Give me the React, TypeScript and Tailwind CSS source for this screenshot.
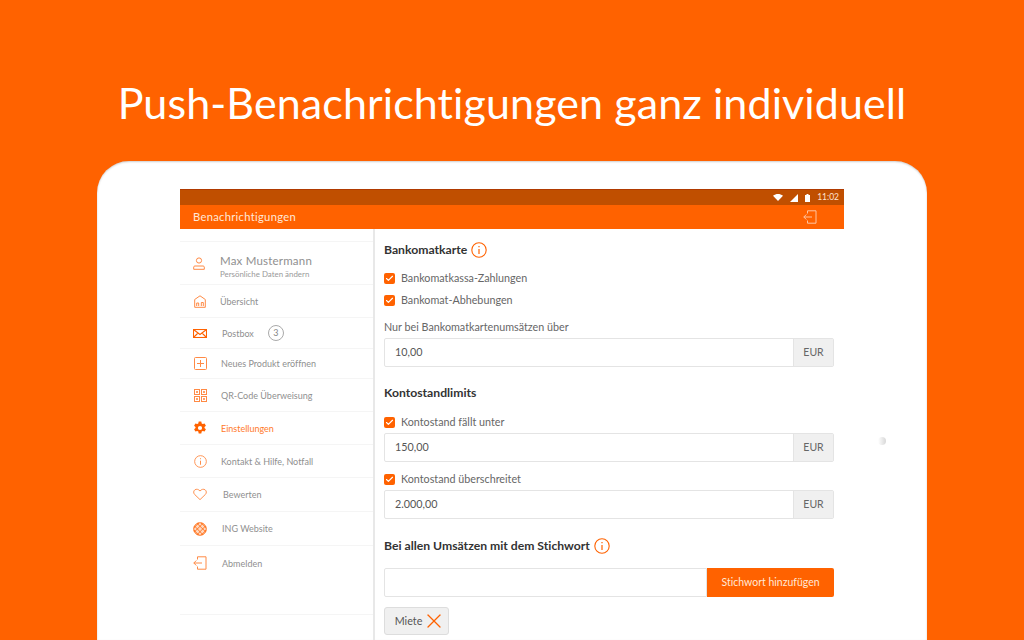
import React from "react";
import { Check, X } from "lucide-react";

const orange = "text-[#ff6200]";

const UserIcon = () => (
  <svg width="12" height="13" viewBox="0 0 12 13" fill="none" stroke="#ff8a45" strokeWidth="1">
    <circle cx="6" cy="3.500" r="2.600" />
    <path d="M1.800 9h8.400c.6 0 1.100.5 1.100 1.100v2.200H.7v-2.200C.7 9.500 1.200 9 1.800 9z" />
  </svg>
);

const HomeIcon = () => (
  <svg width="12" height="13" viewBox="0 0 12 13" fill="none" stroke="#ff8a45" strokeWidth="1">
    <path d="M.7 12.300V4.500L6 .8l5.300 3.700v7.800z" />
    <path d="M2.700 11V8h2v3M7.300 11V7.500h2V11" />
  </svg>
);

const MailIcon = () => (
  <svg width="14" height="9" viewBox="0 0 14 9" fill="none" stroke="#ff6200" strokeWidth="1.100">
    <rect x="0.500" y="0.500" width="13" height="8" />
    <path d="M.5.5 7 5.500l6.500-5M.5 8.500 5 4M13.500 8.500 9 4" />
  </svg>
);

const PlusIcon = () => (
  <svg width="13" height="13" viewBox="0 0 13 13" fill="none" stroke="#ff8a45" strokeWidth="1">
    <rect x="0.500" y="0.500" width="12" height="12" rx="1" />
    <path d="M6.500 3v7M3 6.500h7" />
  </svg>
);

const QrIcon = () => (
  <svg width="13" height="13" viewBox="0 0 13 13" fill="none" stroke="#ff8a45" strokeWidth="1">
    <rect x="0.500" y="0.500" width="5" height="5" />
    <rect x="7.500" y="0.500" width="5" height="5" />
    <rect x="0.500" y="7.500" width="5" height="5" />
    <rect x="7.500" y="7.500" width="5" height="5" />
    <path d="M2.500 2.500h1v1h-1zM9.500 2.500h1v1h-1zM2.500 9.500h1v1h-1zM9.500 9.500h1v1h-1z" fill="#ff8a45" />
  </svg>
);

const GearIcon = () => (
  <svg width="14" height="14" viewBox="0 0 14 14">
    <path
      fill="#ff6200"
      fillRule="evenodd"
      d="M5.700.6h2.600l.4 1.800 1.100.6 1.800-.6 1.300 2.300-1.400 1.200v1.200l1.400 1.200-1.300 2.300-1.800-.6-1.100.6-.4 1.800H5.700l-.4-1.800-1.100-.6-1.800.6L1.100 8.300l1.400-1.200V5.900L1.100 4.700l1.300-2.300 1.800.6 1.100-.6zM7 4.900a2.100 2.100 0 1 0 0 4.200 2.100 2.100 0 0 0 0-4.200z"
    />
  </svg>
);

const InfoIcon = ({ size = 13, color = "#ff8a45" }: { size?: number; color?: string }) => (
  <svg width={size} height={size} viewBox="0 0 16 16" fill="none" stroke={color} strokeWidth="1.100">
    <circle cx="8" cy="8" r="7.200" />
    <path d="M8 7v5M8 4v1.200" strokeWidth="1.200" />
  </svg>
);

const HeartIcon = () => (
  <svg width="15" height="13" viewBox="0 0 15 13" fill="none" stroke="#ff8a45" strokeWidth="1">
    <path d="M7.500 12 1.800 6.500C.2 4.900.5 2.600 2 1.500c1.700-1.200 4-.6 5.500 1.300C9 .9 11.300.3 13 1.500c1.500 1.100 1.800 3.400.2 5z" />
  </svg>
);

const GlobeIcon = () => (
  <svg width="14" height="14" viewBox="0 0 14 14" fill="#ffd9c2" stroke="#ff6200" strokeWidth="0.800">
    <circle cx="7" cy="7" r="6.300" />
    <path d="M1.500 4 10 12.800M4 1.300 12.800 10M.8 8l5 5.200M8 .8l5.200 5M12.500 4 4 12.800M10 1.300 1.300 10M13.200 8l-5 5.200M6 .8l-5.200 5" fill="none" />
  </svg>
);

const ExitIcon = ({ color = "#ff8a45" }: { color?: string }) => (
  <svg width="14" height="14" viewBox="0 0 14 14" fill="none" stroke={color} strokeWidth="1">
    <path d="M4.500 3.500V.8h8.500v12.400H4.500v-2.700" />
    <path d="M9 7H.8M3.300 4.500.8 7l2.500 2.500" />
  </svg>
);

const navItems = [
  { label: "Übersicht", icon: <HomeIcon />, h: "h-[33px]", ml: "ml-[13px]", text: "text-[#8f8f8f]" },
  { label: "Postbox", icon: <MailIcon />, h: "h-[31px]", ml: "ml-[15px]", text: "text-[#8f8f8f]", badge: "3" },
  { label: "Neues Produkt eröffnen", icon: <PlusIcon />, h: "h-[30px]", ml: "ml-[14px]", text: "text-[#8f8f8f]" },
  { label: "QR-Code Überweisung", icon: <QrIcon />, h: "h-[33px]", ml: "ml-[14px]", text: "text-[#8f8f8f]" },
  { label: "Einstellungen", icon: <GearIcon />, h: "h-[33px]", ml: "ml-[14px]", text: "text-[#ff7a2a]" },
  { label: "Kontakt & Hilfe, Notfall", icon: <InfoIcon />, h: "h-[33px]", ml: "ml-[14px]", text: "text-[#8f8f8f]" },
  { label: "Bewerten", icon: <HeartIcon />, h: "h-[34px]", ml: "ml-[16px]", text: "text-[#8f8f8f]" },
  { label: "ING Website", icon: <GlobeIcon />, h: "h-[34px]", ml: "ml-[15px]", text: "text-[#8f8f8f]" },
  { label: "Abmelden", icon: <ExitIcon />, h: "h-[34px]", ml: "ml-[15px]", text: "text-[#8f8f8f]" },
];

const CheckRow = ({ label, className = "" }: { label: string; className?: string }) => (
  <div className={`flex items-center gap-[6px] h-[11px] ${className}`}>
    <span className="flex size-[11px] items-center justify-center rounded-[2px] bg-[#ff6200]">
      <Check size={9} strokeWidth={3} className="text-white" />
    </span>
    <span className="text-[10.750px] text-[#666] leading-none">{label}</span>
  </div>
);

const AmountField = ({ value, className = "" }: { value: string; className?: string }) => (
  <div className={`flex h-[29px] w-[450px] rounded-[2px] border border-[#e4e4e4] ${className}`}>
    <div className="flex flex-1 items-center pl-[10px] text-[10.750px] text-[#555]">{value}</div>
    <div className="flex w-[40px] items-center justify-center border-l border-[#e4e4e4] bg-[#f0f0f0] text-[10.500px] text-[#666]">
      EUR
    </div>
  </div>
);

export default function App() {
  return (
    <div className="relative h-[640px] w-[1024px] overflow-hidden bg-[#ff6200] font-['Lato',sans-serif] [font-variant-ligatures:none]">
      <h1 className="pt-[75px] text-center text-[43px] leading-[56px] font-normal tracking-[0.100px] text-white">
        Push-Benachrichtigungen ganz individuell
      </h1>

      {/* tablet frame */}
      <div className="mt-[30px] ml-[97px] h-[479px] w-[830px] rounded-t-[32px] bg-white pt-[28px] pl-[83px] shadow-[inset_0_1px_2px_rgba(0,0,0,0.2)]">
        <div className="w-[664px]">
          <div className="flex h-[16px] items-center justify-end gap-[7px] border-t border-[#b03a00] bg-[#c04f00] pr-[5px] text-[8.500px] text-[#ffe3d0]">
            <svg width="10" height="7" viewBox="0 0 10 7" fill="white">
              <path d="M0 1.800C3 -.6 7 -.6 10 1.800L5 7z" />
            </svg>
            <svg width="8" height="8" viewBox="0 0 8 8" fill="white">
              <path d="M8 0v8H0z" />
            </svg>
            <svg width="5" height="8" viewBox="0 0 5 8" fill="#fff">
              <path d="M1.500 0h2v1H5v7H0V1h1.500z" />
            </svg>
            <span>11:02</span>
          </div>
          <div className="flex h-[24px] items-center justify-between bg-[#ff6200] pr-[27px] pl-[13px] text-[11.200px] tracking-[0.300px] text-[#ffe8d8]">
            <span>Benachrichtigungen</span>
            <ExitIcon color="#ffc4a0" />
          </div>

          <div className="flex h-[411px]">
            <aside className="h-full w-[195px] shrink-0 border-r-2 border-[#e8e8e8] pt-[12px]">
              <div className="flex h-[44px] items-center border-y border-[#f5f5f5] pl-[13px]">
                <UserIcon />
                <div className="ml-[15px] pt-[7px]">
                  <div className="text-[11.500px] leading-[14px] tracking-[0.200px] text-[#8f8f8f]">Max Mustermann</div>
                  <div className="text-[7.900px] leading-[12px] text-[#999]">Persönliche Daten ändern</div>
                </div>
              </div>
              {navItems.map((item) => (
                <div
                  key={item.label}
                  className={`flex items-center pl-[13px] ${item.h} ${item.label === "Abmelden" ? "" : "border-b border-[#f5f5f5]"}`}
                >
                  <span className="flex w-[14px] justify-center">{item.icon}</span>
                  <span className={`${item.ml} pt-[1px] text-[9px] ${item.text}`}>{item.label}</span>
                  {item.badge && (
                    <span className="ml-[14px] flex size-[16px] items-center justify-center rounded-full border border-[#aaa] text-[9px] text-[#888]">
                      {item.badge}
                    </span>
                  )}
                </div>
              ))}
              <div className="h-[35px] border-b border-[#f5f5f5]" />
            </aside>

            <main className="flex-1 overflow-hidden pt-[13px] pl-[9px]">
              <div className="flex h-[16px] items-center gap-[4px] text-[12.200px] font-bold text-[#333]">
                Bankomatkarte <InfoIcon size={16} color="#ff6200" />
              </div>
              <CheckRow label="Bankomatkassa-Zahlungen" className="mt-[15px]" />
              <CheckRow label="Bankomat-Abhebungen" className="mt-[11px]" />
              <div className="mt-[16px] h-[11px] text-[10.750px] leading-none text-[#666]">
                Nur bei Bankomatkartenumsätzen über
              </div>
              <AmountField value="10,00" className="mt-[5px]" />

              <div className="mt-[19px] h-[14px] text-[12.200px] leading-[14px] font-bold text-[#333]">Kontostandlimits</div>
              <CheckRow label="Kontostand fällt unter" className="mt-[17px]" />
              <AmountField value="150,00" className="mt-[5px]" />
              <CheckRow label="Kontostand überschreitet" className="mt-[12px]" />
              <AmountField value="2.000,00" className="mt-[5px]" />

              <div className="mt-[19px] flex h-[16px] items-center gap-[4px] text-[12.200px] font-bold text-[#333]">
                Bei allen Umsätzen mit dem Stichwort <InfoIcon size={16} color="#ff6200" />
              </div>
              <div className="mt-[14px] flex h-[29px] w-[450px]">
                <div className="flex-1 rounded-l-[2px] border border-[#e4e4e4]" />
                <div className="flex w-[127px] items-center justify-center rounded-r-[2px] bg-[#ff6200] text-[10.500px] text-[#ffe8d8]">
                  Stichwort hinzufügen
                </div>
              </div>
              <div className="mt-[10px] flex h-[28px] w-[65px] items-center justify-center gap-0 rounded-[3px] border border-[#ddd] bg-[#f0f0f0] pl-[8px] text-[10.750px] text-[#555]">
                Miete <X size={24} strokeWidth={1.300} className={orange} />
              </div>
            </main>
          </div>
        </div>
      </div>

      {/* home button speck on the bezel */}
      <div className="absolute top-[437px] left-[878px] size-[8px] rounded-full bg-gradient-to-r from-white to-[#d8d8d8]" />
    </div>
  );
}
